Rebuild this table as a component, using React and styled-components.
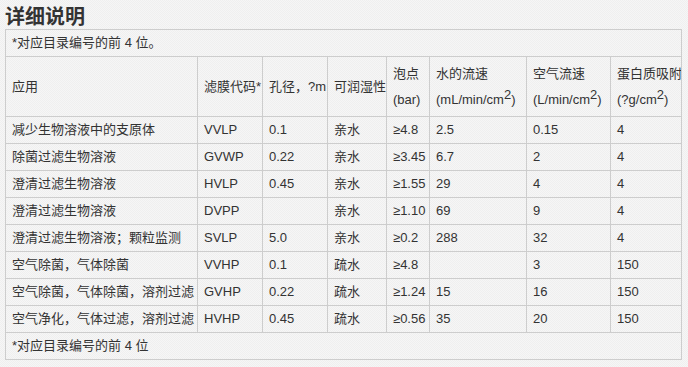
import React from 'react'
import styled, { createGlobalStyle } from 'styled-components'

const GlobalStyle = createGlobalStyle`
  html, body {
    margin: 0;
    padding: 0;
  }
  body {
    background-color: #f3f3f3;
    background-image: repeating-conic-gradient(#f6f6f6 0 25%, #efefef 0 50%);
    background-size: 2px 2px;
    color: #333;
    font-family: "Liberation Sans", "Noto Sans CJK SC", sans-serif;
  }
`

const columns = [192, 65, 65, 59, 43, 97, 84, 71]

const rows = [
  ['减少生物溶液中的支原体', 'VVLP', '0.1', '亲水', '≥4.8', '2.5', '0.15', '4'],
  ['除菌过滤生物溶液', 'GVWP', '0.22', '亲水', '≥3.45', '6.7', '2', '4'],
  ['澄清过滤生物溶液', 'HVLP', '0.45', '亲水', '≥1.55', '29', '4', '4'],
  ['澄清过滤生物溶液', 'DVPP', '', '亲水', '≥1.10', '69', '9', '4'],
  ['澄清过滤生物溶液；颗粒监测', 'SVLP', '5.0', '亲水', '≥0.2', '288', '32', '4'],
  ['空气除菌，气体除菌', 'VVHP', '0.1', '疏水', '≥4.8', '', '3', '150'],
  ['空气除菌，气体除菌，溶剂过滤', 'GVHP', '0.22', '疏水', '≥1.24', '15', '16', '150'],
  ['空气净化，气体过滤，溶剂过滤', 'HVHP', '0.45', '疏水', '≥0.56', '35', '20', '150'],
]

function App() {
  return (
    <Page>
      <GlobalStyle />
      <Title>详细说明</Title>
      <Table>
        <colgroup>
          {columns.map((w, i) => <col key={i} style={{ width: w }} />)}
        </colgroup>
        <tbody>
          <tr>
            <NoteCell colSpan={8}>*对应目录编号的前 4 位。</NoteCell>
          </tr>
          <HeadRow>
            <Cell>应用</Cell>
            <Cell tight>滤膜代码*</Cell>
            <Cell>孔径，?m</Cell>
            <Cell tight>可润湿性</Cell>
            <Cell>泡点<br />(bar)</Cell>
            <Cell>水的流速<br />(mL/min/cm<Sup>2</Sup>)</Cell>
            <Cell>空气流速<br />(L/min/cm<Sup>2</Sup>)</Cell>
            <Cell>蛋白质吸附<br />(?g/cm<Sup>2</Sup>)</Cell>
          </HeadRow>
          {rows.map((r, i) => (
            <Row key={i}>
              {r.map((v, j) => <Cell key={j} tight={j === 4}>{v}</Cell>)}
            </Row>
          ))}
          <tr>
            <NoteCell colSpan={8}>*对应目录编号的前 4 位</NoteCell>
          </tr>
        </tbody>
      </Table>
    </Page>
  )
}

export default App

//#region styles
const Page = styled.div`
  padding: 0 7px 0 5px;
`
const Title = styled.h2`
  margin: 0;
  padding-top: 2px;
  height: 27px;
  line-height: 27px;
  font-size: 20px;
  font-weight: bold;
  color: #333;
  font-family: "Noto Sans CJK SC", sans-serif;
`
const Table = styled.table`
  width: 676px;
  table-layout: fixed;
  border-collapse: collapse;
  border: 1px solid #cdcdcd;
  font-size: 13px;
`
const Cell = styled.td`
  border: 1px solid #cdcdcd;
  padding: 0 ${p => (p.tight ? '0 0 6px' : '6px')};
  white-space: nowrap;
  overflow: hidden;
  vertical-align: middle;
  line-height: 26px;
`
const NoteCell = styled(Cell)`
  height: 26px;
`
const Row = styled.tr`
  height: 27px;
`
const HeadRow = styled.tr`
  height: 60px;
`
const Sup = styled.sup`
  font-size: 13px;
  line-height: 0;
  vertical-align: 5px;
`
//#endregion
